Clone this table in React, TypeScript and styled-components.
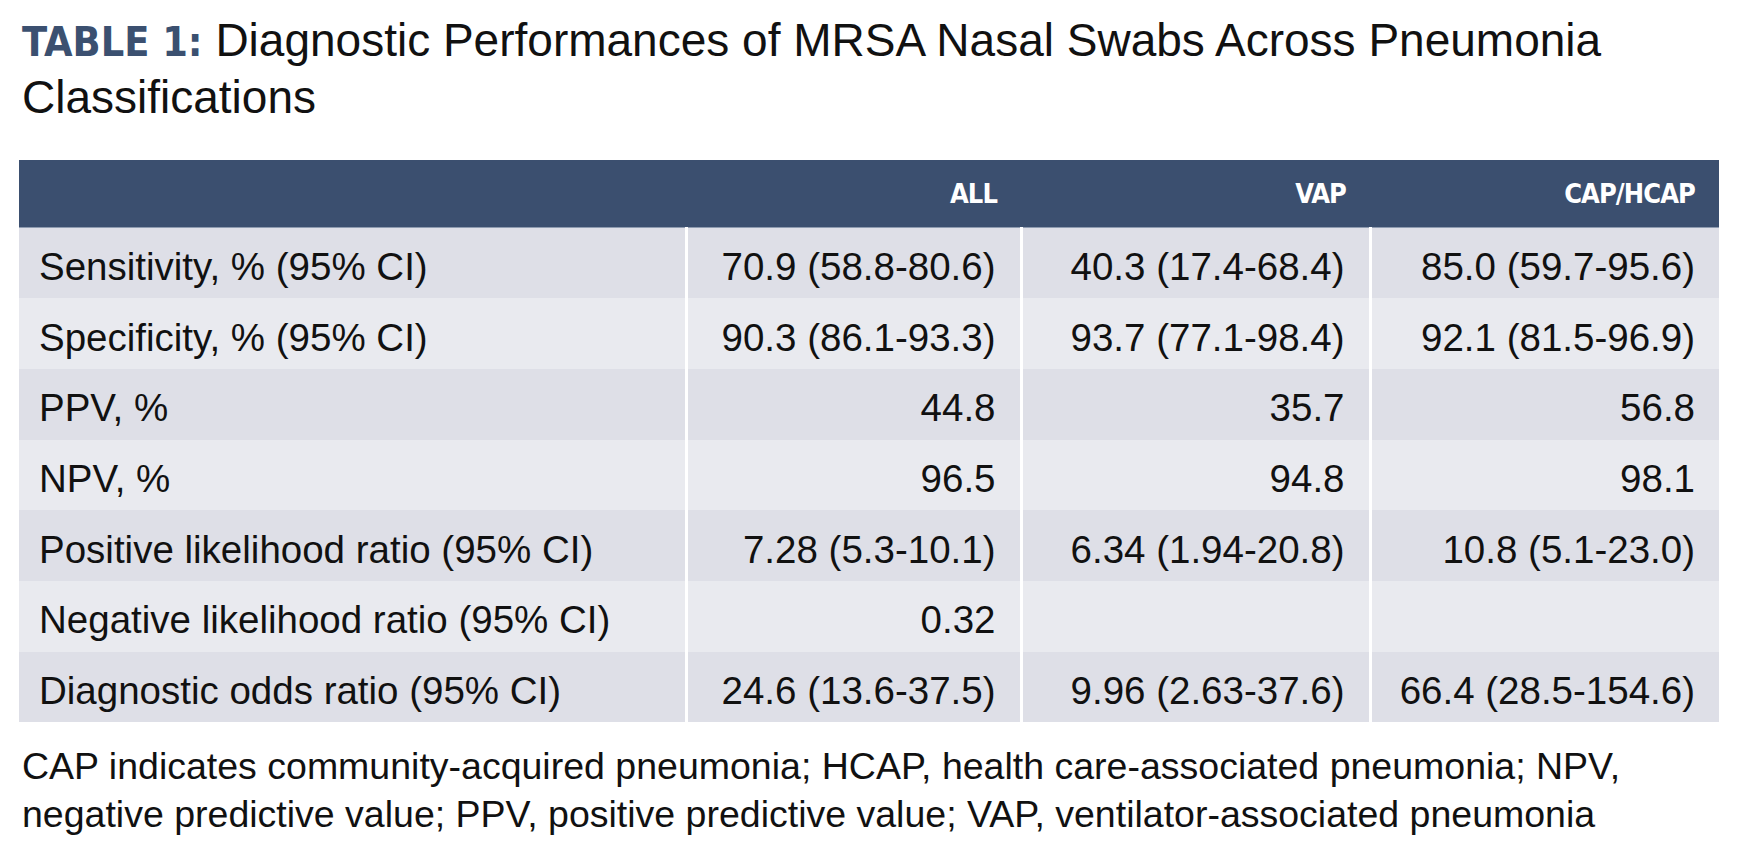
import { FC } from 'react'
import styled, { createGlobalStyle } from 'styled-components'

const GlobalStyle = createGlobalStyle`
  html, body {
    margin: 0;
    padding: 0;
    background: #ffffff;
  }
  body {
    font-family: 'Liberation Sans', Arial, sans-serif;
    color: #111111;
  }
`

interface Row {
  label: string
  all: string
  vap: string
  cap: string
}

const rows: Row[] = [
  {
    label: 'Sensitivity, % (95% CI)',
    all: '70.9 (58.8-80.6)',
    vap: '40.3 (17.4-68.4)',
    cap: '85.0 (59.7-95.6)',
  },
  {
    label: 'Specificity, % (95% CI)',
    all: '90.3 (86.1-93.3)',
    vap: '93.7 (77.1-98.4)',
    cap: '92.1 (81.5-96.9)',
  },
  { label: 'PPV, %', all: '44.8', vap: '35.7', cap: '56.8' },
  { label: 'NPV, %', all: '96.5', vap: '94.8', cap: '98.1' },
  {
    label: 'Positive likelihood ratio (95% CI)',
    all: '7.28 (5.3-10.1)',
    vap: '6.34 (1.94-20.8)',
    cap: '10.8 (5.1-23.0)',
  },
  { label: 'Negative likelihood ratio (95% CI)', all: '0.32', vap: '', cap: '' },
  {
    label: 'Diagnostic odds ratio (95% CI)',
    all: '24.6 (13.6-37.5)',
    vap: '9.96 (2.63-37.6)',
    cap: '66.4 (28.5-154.6)',
  },
]

const App: FC = () => (
  <>
    <GlobalStyle />
    <Page>
      <Title>
        <TitleTag>TABLE 1:</TitleTag>
        {' '}Diagnostic Performances of MRSA Nasal Swabs Across Pneumonia
        Classifications
      </Title>
      <Table>
        <colgroup>
          <col style={{ width: 667 }} />
          <col style={{ width: 335 }} />
          <col style={{ width: 349 }} />
          <col style={{ width: 349 }} />
        </colgroup>
        <thead>
          <tr>
            <HeadCell />
            <HeadCell>ALL</HeadCell>
            <HeadCell>VAP</HeadCell>
            <HeadCell>CAP/HCAP</HeadCell>
          </tr>
        </thead>
        <tbody>
          {rows.map((row, i) => (
            <BodyRow key={row.label} striped={i % 2 === 1}>
              <LabelCell>{row.label}</LabelCell>
              <ValueCell>{row.all}</ValueCell>
              <ValueCell>{row.vap}</ValueCell>
              <ValueCell>{row.cap}</ValueCell>
            </BodyRow>
          ))}
        </tbody>
      </Table>
      <Footnote>
        CAP indicates community-acquired pneumonia; HCAP, health care-associated
        pneumonia; NPV,
        <br />
        negative predictive value; PPV, positive predictive value; VAP,
        ventilator-associated pneumonia
      </Footnote>
    </Page>
  </>
)

export default App

const Page = styled.div`
  width: 1743px;
  padding: 12px 0 0 19px;
  box-sizing: border-box;
`

const Title = styled.h1`
  margin: 0 0 34px 3px;
  width: 1650px;
  font-family: 'Liberation Sans', Arial, sans-serif;
  font-weight: normal;
  font-size: 46px;
  line-height: 57px;
  color: #111111;
`

const TitleTag = styled.span`
  font-family: 'DejaVu Sans Condensed', 'Liberation Sans', sans-serif;
  font-weight: bold;
  font-size: 41px;
  line-height: 1;
  color: #3b5070;
`

const Table = styled.table`
  width: 1700px;
  border-collapse: collapse;
  table-layout: fixed;
`

const HeadCell = styled.th`
  height: 67px;
  padding: 0 24px 0 20px;
  background: #3b4f6f;
  border-bottom: 1px solid #8e9bb0;
  color: #ffffff;
  text-align: right;
  font-family: 'DejaVu Sans Condensed', 'Liberation Sans', sans-serif;
  font-weight: bold;
  font-size: 27px;
  letter-spacing: -0.9px;
`

const BodyRow = styled.tr<{ striped?: boolean }>`
  height: 70.7px;
  background: ${({ striped }) => (striped ? '#e9eaef' : '#dedfe7')};
`

const LabelCell = styled.td`
  padding: 8px 20px 0 20px;
  font-size: 38.5px;
  text-align: left;
  white-space: nowrap;
  border-right: 3px solid #ffffff;
`

const ValueCell = styled.td`
  padding: 8px 24px 0 10px;
  font-size: 38.5px;
  text-align: right;
  white-space: nowrap;
  border-right: 3px solid #ffffff;

  &:last-child {
    border-right: none;
  }
`

const Footnote = styled.p`
  margin: 20px 0 0 3px;
  width: 1710px;
  font-size: 37.5px;
  line-height: 48px;
  white-space: nowrap;
  color: #111111;
`
